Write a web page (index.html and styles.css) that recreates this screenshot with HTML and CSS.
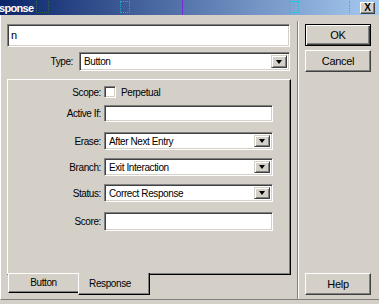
FILE: index.html
```html
<!DOCTYPE html>
<html lang="en">
<head>
  <meta charset="UTF-8">
  <title>Response</title>
  <link rel="stylesheet" href="styles.css">
</head>
<body>
  <div class="titlebar">
    <span class="title">sponse</span>
    <span class="mark mark-green"></span>
    <span class="mark mark-cyan1"></span>
    <span class="mark mark-purple"></span>
    <span class="mark mark-cyan2"></span>
    <span class="mark mark-violet"></span>
    <span class="close">X</span>
  </div>
  <div class="dialog">
    <div class="main">
      <div class="field name">n</div>
      <div class="type-row">
        <span class="type-label">Type:</span>
        <div class="combo type-combo"><span class="combo-text">Button</span><span class="combo-btn"></span></div>
      </div>
      <div class="panel">
        <div class="row row-scope">
          <span class="label">Scope:</span>
          <span class="check"></span>
          <span class="check-text">Perpetual</span>
        </div>
        <div class="row row-active">
          <span class="label">Active If:</span>
          <div class="field ctl"></div>
        </div>
        <div class="row row-erase">
          <span class="label">Erase:</span>
          <div class="combo ctl"><span class="combo-text">After Next Entry</span><span class="combo-btn"></span></div>
        </div>
        <div class="row row-branch">
          <span class="label">Branch:</span>
          <div class="combo ctl"><span class="combo-text">Exit Interaction</span><span class="combo-btn"></span></div>
        </div>
        <div class="row row-status">
          <span class="label">Status:</span>
          <div class="combo ctl"><span class="combo-text">Correct Response</span><span class="combo-btn"></span></div>
        </div>
        <div class="row row-score">
          <span class="label">Score:</span>
          <div class="field ctl score"></div>
        </div>
      </div>
      <div class="tabs">
        <span class="tab">Button</span>
        <span class="tab active">Response</span>
      </div>
    </div>
    <div class="sep"></div>
    <div class="side">
      <button class="btn default">OK</button>
      <button class="btn">Cancel</button>
      <button class="btn help">Help</button>
    </div>
  </div>
</body>
</html>
```

FILE: styles.css
```css
* {
  box-sizing: border-box;
}
body {
  margin: 0;
  width: 379px;
  height: 304px;
  overflow: hidden;
  background: #d4d0c8;
  font-family: "Liberation Sans", Arial, sans-serif;
  font-size: 10px;
  letter-spacing: -0.4px;
  color: #000;
}

/* title bar */
.titlebar {
  position: relative;
  height: 15px;
  display: flex;
  align-items: center;
  justify-content: space-between;
  background: linear-gradient(to right, #0a246a, #a6caf0);
}
.title {
  margin-left: -1px;
  color: #fff;
  font-weight: bold;
  font-size: 11px;
  letter-spacing: -0.7px;
}
.close {
  width: 15px;
  height: 12px;
  margin-right: 4px;
  margin-top: 1px;
  background: #d4d0c8;
  border: 1px solid;
  border-color: #fff #404040 #404040 #fff;
  box-shadow: inset -1px -1px #808080;
  font-weight: bold;
  font-size: 10px;
  line-height: 10px;
  text-align: center;
  letter-spacing: 0;
}
.mark {
  position: absolute;
  top: 1px;
  height: 12px;
}
.mark-green {
  left: 36px;
  width: 13px;
  border-left: 1px dotted #2c6a3a;
  border-right: 1px dotted #2c6a3a;
  border-bottom: 1px dotted #2c6a3a;
}
.mark-cyan1 {
  left: 120px;
  width: 10px;
  border: 1px dotted #1ab0d0;
}
.mark-purple {
  left: 182px;
  top: 0;
  width: 1px;
  height: 15px;
  background: #7a2ad6;
}
.mark-cyan2 {
  left: 289px;
  width: 10px;
  border: 1px dotted #1ac0d8;
}
.mark-violet {
  left: 349px;
  width: 4px;
  border-left: 1px dotted #b070c8;
}

/* dialog body */
.dialog {
  display: flex;
  height: 285px;
  border-left: 1px solid #fff;
  border-bottom: 1px solid #808080;
}
.main {
  margin-left: 6px;
  width: 284px;
  padding-top: 9px;
}
.field {
  background: #fff;
  border: 1px solid;
  border-color: #808080 #fff #fff #808080;
  box-shadow: inset 1px 1px #404040, inset -1px -1px #d4d0c8;
}
.name {
  width: 283px;
  height: 23px;
  padding-left: 3px;
  line-height: 21px;
  font-size: 11px;
}
.type-row {
  display: flex;
  align-items: center;
  margin-top: 5px;
  height: 19px;
}
.type-label {
  width: 66px;
  margin-right: 6px;
  text-align: right;
}
.combo {
  display: flex;
  align-items: center;
  height: 18px;
  padding: 2px;
  background: #fff;
  border: 1px solid;
  border-color: #808080 #fff #fff #808080;
  box-shadow: inset 1px 1px #404040, inset -1px -1px #d4d0c8;
}
.type-combo {
  width: 211px;
  height: 19px;
}
.combo-text {
  flex: 1;
  padding-left: 2px;
}
.combo-btn {
  display: flex;
  align-items: center;
  justify-content: center;
  width: 16px;
  height: 100%;
  background: #d4d0c8;
  border: 1px solid;
  border-color: #d4d0c8 #404040 #404040 #d4d0c8;
  box-shadow: inset 1px 1px #fff, inset -1px -1px #808080;
}
.combo-btn::after {
  content: "";
  border-top: 4px solid #000;
  border-left: 3.5px solid transparent;
  border-right: 3.5px solid transparent;
}

/* tab page */
.panel {
  margin-top: 8px;
  width: 284px;
  height: 196px;
  padding-top: 6px;
  border: 1px solid;
  border-color: #fff #000 #000 #fff;
  box-shadow: inset -1px -1px #808080;
}
.row {
  display: flex;
  align-items: center;
}
.label {
  width: 93px;
  margin-right: 3px;
  text-align: right;
}
.ctl {
  width: 169px;
}
.row-scope {
  height: 12px;
}
.check {
  width: 12px;
  height: 12px;
  background: #fff;
  border: 1px solid;
  border-color: #808080 #fff #fff #808080;
  box-shadow: inset 1px 1px #404040, inset -1px -1px #d4d0c8;
}
.check-text {
  margin-left: 5px;
}
.row-active {
  margin-top: 7px;
}
.row-active .field {
  height: 17px;
}
.row-erase {
  margin-top: 10px;
}
.row-branch,
.row-status {
  margin-top: 8px;
}
.row-score {
  margin-top: 10px;
}
.score {
  height: 19px;
}

/* tabs under the page */
.tabs {
  display: flex;
  margin-top: -2px;
  padding-left: 1px;
}
.tab {
  width: 70px;
  height: 20px;
  padding-top: 3px;
  text-align: center;
  border-top: 1px solid #fff;
  border-left: 1px solid #fff;
  border-bottom: 1px solid #000;
  box-shadow: inset 0 -1px #808080;
  background: #d4d0c8;
}
.tab.active {
  width: 72px;
  height: 22px;
  margin-top: 0;
  padding-top: 5px;
  padding-right: 8px;
  border-top: none;
  border-right: 1px solid #000;
  box-shadow: inset -1px -1px #808080;
}

/* right column */
.sep {
  width: 2px;
  margin-left: 6px;
  margin-top: 6px;
  border-left: 1px solid #808080;
  border-right: 1px solid #fff;
}
.side {
  display: flex;
  flex-direction: column;
  gap: 4px;
  width: 66px;
  margin-left: 6px;
  padding-top: 9px;
  padding-bottom: 4px;
}
.btn {
  height: 22px;
  padding: 0;
  font-family: inherit;
  font-size: 11px;
  letter-spacing: -0.3px;
  color: #000;
  background: #d4d0c8;
  border: 1px solid;
  border-color: #fff #404040 #404040 #fff;
  box-shadow: inset -1px -1px #808080;
}
.btn.default {
  border-color: #000;
  box-shadow: inset 1px 1px #fff, inset -1px -1px #404040, inset -2px -2px #808080;
}
.help {
  margin-top: auto;
}
```
